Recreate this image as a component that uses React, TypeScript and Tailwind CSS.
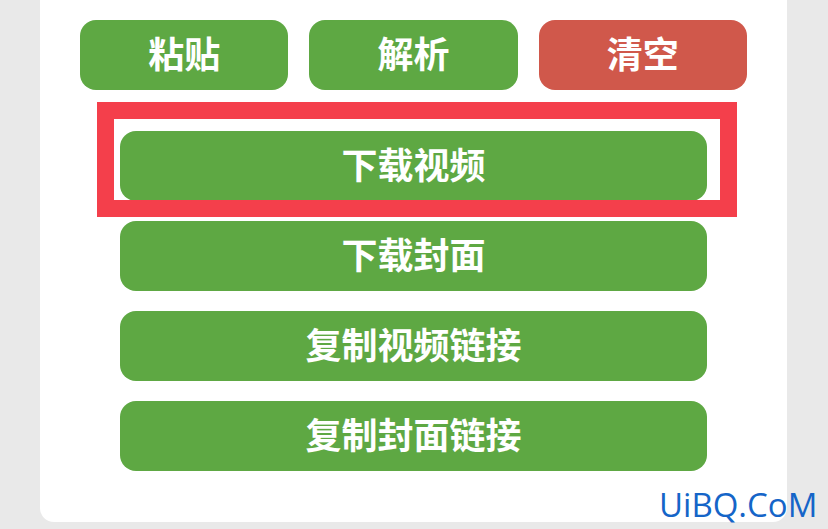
import React from "react";

const cjk = { fontFamily: '"Noto Sans CJK SC", "Noto Sans", sans-serif' };

function Btn({ label, red }: { label: string; red?: boolean }) {
  return (
    <button
      style={cjk}
      className={`flex h-[70px] w-full items-center justify-center rounded-[16px] pb-[6px] text-[36px] font-bold leading-none text-white ${
        red ? "bg-[#d0584b]" : "bg-[#5ea843]"
      }`}
    >
      {label}
    </button>
  );
}

export default function App() {
  return (
    <div className="relative h-[529px] w-[828px] overflow-hidden bg-[#e9e9e9]">
      <div className="relative ml-[40px] flex h-[522px] w-[747px] flex-col rounded-b-[14px] bg-white px-[40px] pt-[20px]">
        <div className="grid grid-cols-3 gap-[21px]">
          <Btn label="粘贴" />
          <Btn label="解析" />
          <Btn label="清空" red />
        </div>
        <div className="mt-[41px] flex flex-col gap-[20px] px-[40px]">
          <Btn label="下载视频" />
          <Btn label="下载封面" />
          <Btn label="复制视频链接" />
          <Btn label="复制封面链接" />
        </div>
        <div className="pointer-events-none absolute left-[57px] top-[102px] h-[115px] w-[640px] border-[17px] border-[#f43f4b]" />
      </div>
      <div
        className="absolute left-[659px] top-[485px] text-[33px] leading-[40px] text-[#1565c8]"
        style={{ fontFamily: '"Open Sans", sans-serif' }}
      >
        UiBQ.CoM
      </div>
    </div>
  );
}
